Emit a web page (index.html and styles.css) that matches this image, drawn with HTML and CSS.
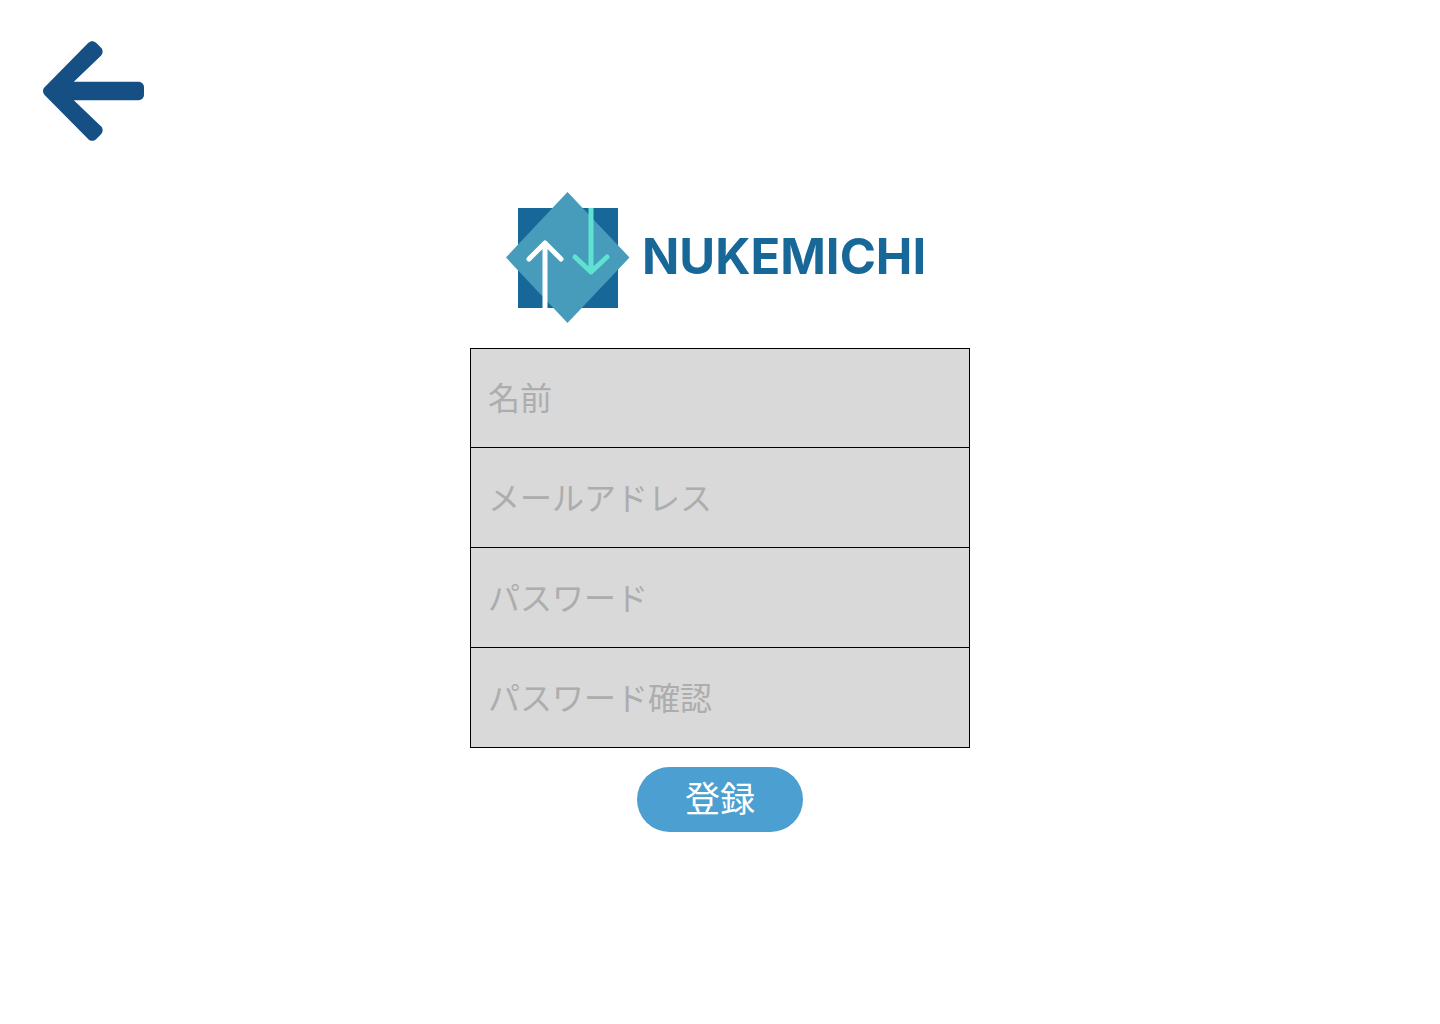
FILE: index.html
```html
<!DOCTYPE html>
<html lang="ja">
<head>
<meta charset="utf-8">
<meta name="viewport" content="width=device-width, initial-scale=1">
<title>NUKEMICHI</title>
<link rel="stylesheet" href="styles.css">
</head>
<body>
<header class="topbar">
  <a class="back" href="#" aria-label="戻る">
    <svg class="back-icon" viewBox="0 37 448 438" preserveAspectRatio="none" aria-hidden="true">
      <path fill="currentColor" d="M257.5 445.1l-22.2 22.2c-9.4 9.4-24.6 9.4-33.9 0L7 273c-9.4-9.4-9.4-24.6 0-33.9L201.4 44.7c9.4-9.4 24.6-9.4 33.9 0l22.2 22.2c9.5 9.5 9.3 25-.4 34.3L136.6 216H424c13.3 0 24 10.7 24 24v32c0 13.3-10.7 24-24 24H136.6l120.5 114.8c9.8 9.3 10 24.8.4 34.3z"/>
    </svg>
  </a>
</header>
<main class="signup">
  <h1 class="brand">
    <svg class="brand-icon" viewBox="0 0 124 131" aria-hidden="true">
      <defs><clipPath id="square"><rect x="12" y="16" width="100" height="100"/></clipPath></defs>
      <rect x="12" y="16" width="100" height="100" fill="#176899"/>
      <path d="M61.5 0L123.5 65.5L61.5 131L0 65.5Z" fill="#469cba"/>
      <g clip-path="url(#square)" fill="none" stroke-width="5" stroke-linecap="round" stroke-linejoin="round">
        <path d="M39 122V51M23 67L39 51L55 67" stroke="#fff"/>
        <path d="M85 10V80M69 65L85 80L101 65" stroke="#5fe3d0"/>
      </g>
    </svg>
    <span class="brand-name">NUKEMICHI</span>
  </h1>
  <form class="form">
    <div class="fields">
      <input class="field" type="text" name="name" placeholder="名前" aria-label="名前">
      <input class="field" type="email" name="email" placeholder="メールアドレス" aria-label="メールアドレス">
      <input class="field" type="password" name="password" placeholder="パスワード" aria-label="パスワード">
      <input class="field" type="password" name="confirm" placeholder="パスワード確認" aria-label="パスワード確認">
    </div>
    <button class="submit" type="submit">登録</button>
  </form>
</main>
</body>
</html>
```
FILE: styles.css
```css
* {
  box-sizing: border-box;
}

body {
  margin: 0;
  background: #fff;
  font-family: "Inter", "Noto Sans CJK JP", sans-serif;
}

.topbar {
  display: flex;
  padding: 41px 43px 51px;
}

.back {
  display: block;
  color: #154f84;
}

.back-icon {
  display: block;
  width: 101px;
  height: 100px;
}

.signup {
  width: 100%;
  max-width: 500px;
  margin: 0 auto;
}

.brand {
  display: flex;
  align-items: center;
  gap: 12px;
  margin: 0 0 25px;
  padding-left: 36px;
}

.brand-icon {
  flex: none;
  width: 124px;
  height: 131px;
}

.brand-name {
  padding-bottom: 2px;
  color: #176899;
  font-size: 49px;
  font-weight: 700;
  line-height: 60px;
}

.form {
  display: flex;
  flex-direction: column;
  align-items: center;
  gap: 19px;
}

.fields {
  display: flex;
  flex-direction: column;
  width: 100%;
}

.field {
  width: 100%;
  height: 100px;
  padding: 0 17px 4px;
  border: 1px solid #000;
  border-top-width: 0;
  border-radius: 0;
  background: #d9d9d9;
  color: #333;
  font-family: "Noto Sans CJK JP", sans-serif;
  font-size: 32px;
}

.field:first-child {
  border-top-width: 1px;
}

.field::placeholder {
  color: #adadad;
  opacity: 1;
}

.submit {
  min-width: 166px;
  height: 65px;
  padding: 0 32px 5px;
  border: 0;
  border-radius: 33px;
  background: #4c9fd1;
  color: #fff;
  font-family: "Noto Sans CJK JP", sans-serif;
  font-size: 35px;
  line-height: 60px;
  cursor: pointer;
}
```
